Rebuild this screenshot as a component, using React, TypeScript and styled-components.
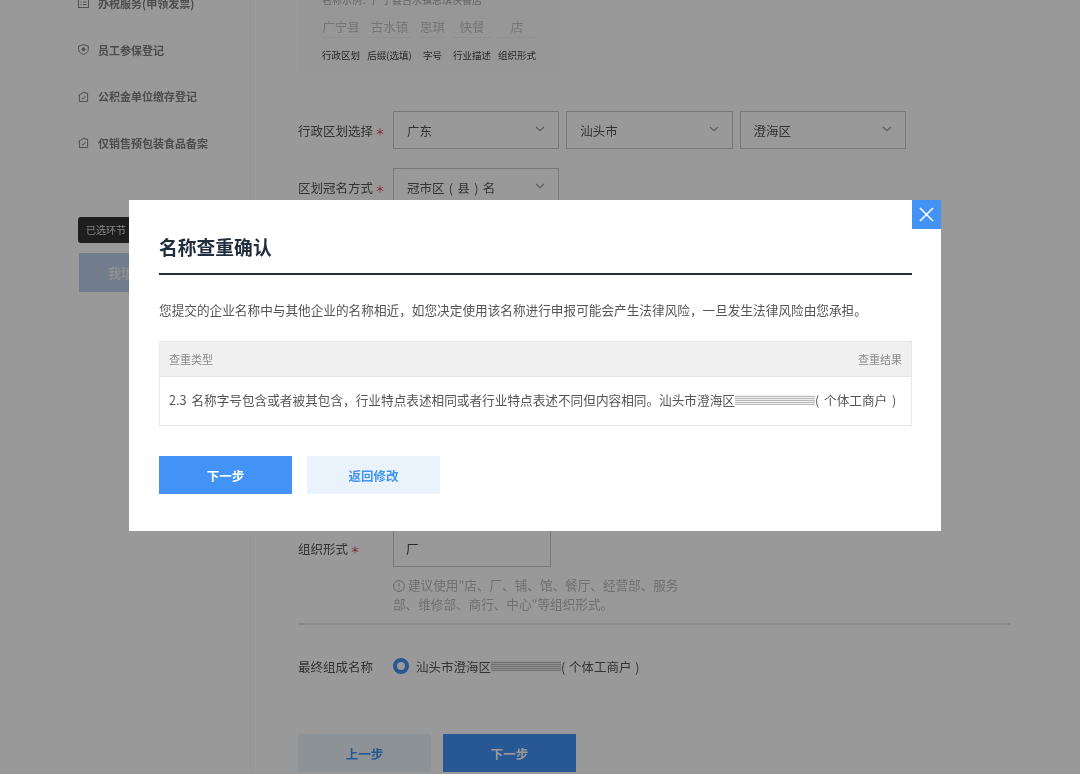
import React from "react";
import styled, { createGlobalStyle } from "styled-components";

const Global = createGlobalStyle`
  html, body { margin: 0; padding: 0; background: #fff; }
  * { box-sizing: border-box; }
  body { font-family: "Noto Sans CJK SC", "Liberation Sans", sans-serif; }
`;

const Page = styled.div`
  width: 1080px;
  height: 774px;
  overflow: hidden;
  display: flex;
  align-items: flex-start;
  background: #fff;
  filter: blur(0.35px);
`;

const Sidebar = styled.aside`
  width: 251px;
  height: 774px;
  flex: none;
  border-right: 1px solid #f3f3f3;
  padding: 0 0 0 78px;
  display: flex;
  flex-direction: column;
`;

const NavList = styled.nav`
  margin-top: -9px;
  display: flex;
  flex-direction: column;
  gap: 22px;
`;

const NavItem = styled.div`
  height: 24.5px;
  display: flex;
  align-items: center;
  gap: 9px;
  font-size: 11px;
  font-weight: 700;
  color: #808080;
  svg { flex: none; }
`;

const Tip = styled.div`
  margin-top: 62px;
  width: 120px;
  height: 26px;
  border-radius: 3px;
  background: #333;
  color: #ddd;
  font-size: 10px;
  line-height: 26px;
  padding-left: 8px;
`;

const SideBtn = styled.div`
  margin: 10px 0 0 1px;
  width: 140px;
  height: 39px;
  background: #bccfea;
  color: #eee;
  font-size: 13px;
  font-weight: 700;
  line-height: 39px;
  padding-left: 29px;
`;

const Main = styled.main`
  margin-left: 47px;
  width: 713px;
  display: flex;
  flex-direction: column;
  align-items: flex-start;
`;

const SampleBox = styled.section`
  width: 262px;
  height: 72px;
  background: #fcfcfc;
  padding: 0 0 0 24px;
  overflow: hidden;
`;

const SampleTitle = styled.div`
  height: 15px;
  margin-top: -8px;
  font-size: 10px;
  line-height: 15px;
  color: #aaa;
`;

const SampleGrid = styled.div`
  display: grid;
  grid-template-columns: 38px 45px 27px 38px 38px;
  column-gap: 7px;
  margin-top: 10px;
`;

const SampleValue = styled.div`
  height: 21px;
  white-space: nowrap;
  border-bottom: 1px solid #f0f0f0;
  font-size: 12.5px;
  line-height: 20px;
  color: #c4c4c4;
  text-align: center;
`;

const SampleLabel = styled.div`
  margin-top: 10px;
  white-space: nowrap;
  font-size: 9.5px;
  line-height: 14px;
  color: #444;
  text-align: center;
`;

const Row = styled.div<{ $top: number }>`
  margin-top: ${(p) => p.$top}px;
  display: flex;
  align-items: center;
  gap: 7px;
`;

const Label = styled.label`
  width: 88px;
  flex: none;
  font-size: 12.5px;
  color: #555;
  white-space: nowrap;
  b { color: #d9334a; font-weight: 400; font-size: 10px; margin-left: 2px; }
`;

const Select = styled.div`
  width: 166.3px;
  height: 38px;
  border: 1px solid #c8c8c8;
  padding: 0 13px 0 13px;
  display: flex;
  align-items: center;
  justify-content: space-between;
  font-size: 12.5px;
  word-spacing: 1.5px;
  color: #555;
  svg { flex: none; margin-top: -3px; }
`;

const Input = styled.div`
  width: 158px;
  height: 38px;
  border: 1px solid #c8c8c8;
  padding: 0 12px;
  display: flex;
  align-items: center;
  font-size: 12.5px;
  color: #444;
`;

const Hidden = styled.div`
  height: 323px;
`;

const Hint = styled.p`
  margin: 8px 0 0 95px;
  width: 300px;
  font-size: 12.6px;
  line-height: 19px;
  color: #bbb;
  svg { vertical-align: -2px; margin-right: 3px; }
`;

const Rule = styled.hr`
  margin: 10px 0 0;
  width: 712px;
  border: 0;
  height: 2px;
  background: #e5e5e5;
`;

const NameRow = styled.div`
  margin-top: 32px;
  height: 18px;
  display: flex;
  align-items: center;
`;

const NameLabel = styled.span`
  width: 95px;
  font-size: 12.5px;
  color: #555;
  white-space: nowrap;
`;

const Radio = styled.span`
  width: 16px;
  height: 16px;
  border-radius: 50%;
  border: 4px solid #4293f5;
  background: #fff;
  margin-right: 7px;
  flex: none;
`;

const NameText = styled.span`
  display: flex;
  align-items: center;
  font-size: 12.5px;
  word-spacing: 1px;
  color: #555;
  white-space: pre;
`;

const Redacted = styled.span<{ $w: number }>`
  display: inline-block;
  width: ${(p) => p.$w}px;
  height: 10px;
  background: repeating-linear-gradient(0deg, #bbb 0 1px, #eee 1px 2px);
  filter: blur(0.6px);
`;

const Actions = styled.div`
  margin-top: 59px;
  display: flex;
  gap: 12px;
`;

const Btn = styled.button<{ $primary?: boolean }>`
  width: 133px;
  height: 38px;
  border: 0;
  padding: 0;
  font-family: inherit;
  font-size: 12.5px;
  font-weight: 700;
  color: ${(p) => (p.$primary ? "#fff" : "#4293f5")};
  background: ${(p) => (p.$primary ? "#4293f5" : "#eaf3fb")};
`;

const Overlay = styled.div`
  position: fixed;
  inset: 0;
  background: rgba(0, 0, 0, 0.4);
`;

const Modal = styled.div`
  position: relative;
  margin: 200px 0 0 129px;
  width: 812px;
  height: 331px;
  background: #fff;
  padding: 0 29px 0 30px;
  filter: blur(0.3px);
`;

const Close = styled.button`
  position: absolute;
  top: 0;
  right: 0;
  width: 29px;
  height: 29px;
  border: 0;
  padding: 0;
  background: #4293f5;
  display: flex;
  align-items: center;
  justify-content: center;
`;

const Title = styled.h2`
  margin: 0;
  height: 75px;
  padding-top: 31px;
  border-bottom: 2px solid #1f2d3d;
  font-size: 18.8px;
  line-height: 32px;
  font-weight: 700;
  color: #1f2d3d;
`;

const Notice = styled.p`
  margin: 25px 0 0;
  font-size: 12.65px;
  line-height: 20px;
  color: #555;
  white-space: nowrap;
`;

const Table = styled.div`
  margin-top: 21px;
  border: 1px solid #e8e8e8;
`;

const TableHead = styled.div`
  height: 35px;
  padding: 0 9px;
  background: #f0f0f0;
  border-bottom: 1px solid #e4e4e4;
  display: flex;
  align-items: center;
  justify-content: space-between;
  font-size: 11px;
  color: #8a8a8a;
`;

const TableRow = styled.div`
  height: 48px;
  padding: 0 9px 3px;
  display: flex;
  align-items: center;
  font-size: 12.65px;
  word-spacing: 2px;
  color: #555;
  white-space: pre;
`;

const ModalActions = styled.div`
  margin-top: 30px;
  display: flex;
  gap: 15px;
`;

const navItems = ["办税服务(申领发票)", "员工参保登记", "公积金单位缴存登记", "仅销售预包装食品备案"];

const DocIcon = () => (
  <svg width="11" height="11" viewBox="0 0 11 11" fill="none" stroke="#888" strokeWidth="1">
    <rect x="0.5" y="1.5" width="10" height="8" />
    <path d="M2.5 4h1M2.5 6.5h1M5 4h3.5M5 6.5h3.5" />
  </svg>
);
const ShieldIcon = () => (
  <svg width="11" height="11" viewBox="0 0 11 11" fill="none" stroke="#888" strokeWidth="1">
    <path d="M5.5.7 10.3 2v3.4c0 2.6-2 4.2-4.8 5C2.700 9.600.7 8 .7 5.400V2z" />
    <circle cx="5.500" cy="5.300" r="1.500" fill="#888" />
  </svg>
);
const HomeIcon = () => (
  <svg width="11" height="11" viewBox="0 0 11 11" fill="none" stroke="#888" strokeWidth="1">
    <path d="M.6 4.400 6.200.8l.2 1.200h3.200v8.500H1.400V4" />
    <path d="M3.600 7l1.500 1 2.300-3" />
  </svg>
);
const navIcons = [DocIcon, ShieldIcon, HomeIcon, HomeIcon];

const Chevron = () => (
  <svg width="10" height="6" viewBox="0 0 10 6" fill="none" stroke="#999" strokeWidth="1.2">
    <path d="M1 1l4 3.600L9 1" />
  </svg>
);

const sample = [
  ["广宁县", "行政区划"],
  ["古水镇", "后缀(选填)"],
  ["思琪", "字号"],
  ["快餐", "行业描述"],
  ["店", "组织形式"],
];

export default function App() {
  return (
    <>
      <Global />
      <Page>
        <Sidebar>
          <NavList>
            {navItems.map((t, i) => {
              const I = navIcons[i];
              return (
                <NavItem key={t}>
                  <I />
                  {t}
                </NavItem>
              );
            })}
          </NavList>
          <Tip>已选环节</Tip>
          <SideBtn>我填好了</SideBtn>
        </Sidebar>
        <Main>
          <SampleBox>
            <SampleTitle>名称示例：广宁县古水镇思琪快餐店</SampleTitle>
            <SampleGrid>
              {sample.map(([v]) => (
                <SampleValue key={v}>{v}</SampleValue>
              ))}
              {sample.map(([, l]) => (
                <SampleLabel key={l}>{l}</SampleLabel>
              ))}
            </SampleGrid>
          </SampleBox>
          <Row $top={39}>
            <Label>
              行政区划选择<b>＊</b>
            </Label>
            <Select>
              广东
              <Chevron />
            </Select>
            <Select>
              汕头市
              <Chevron />
            </Select>
            <Select>
              澄海区
              <Chevron />
            </Select>
          </Row>
          <Row $top={19}>
            <Label>
              区划冠名方式<b>＊</b>
            </Label>
            <Select>
              冠市区 ( 县 ) 名
              <Chevron />
            </Select>
          </Row>
          <Hidden />
          <Row $top={0}>
            <Label>
              组织形式<b>＊</b>
            </Label>
            <Input>厂</Input>
          </Row>
          <Hint>
            <svg width="12" height="12" viewBox="0 0 12 12" fill="none" stroke="#aaa" strokeWidth="1">
              <circle cx="6" cy="6" r="5.400" />
              <path d="M6 2.800v4M6 8.200v1" />
            </svg>
            建议使用"店、厂、铺、馆、餐厅、经营部、服务部、维修部、商行、中心"等组织形式。
          </Hint>
          <Rule />
          <NameRow>
            <NameLabel>最终组成名称</NameLabel>
            <Radio />
            <NameText>
              汕头市澄海区
              <Redacted $w={70} />( 个体工商户 )
            </NameText>
          </NameRow>
          <Actions>
            <Btn>上一步</Btn>
            <Btn $primary>下一步</Btn>
          </Actions>
        </Main>
      </Page>
      <Overlay>
        <Modal>
          <Close aria-label="关闭">
            <svg width="15" height="15" viewBox="0 0 15 15" fill="none" stroke="#fff" strokeWidth="1.6">
              <path d="M1 1l13 13M14 1L1 14" />
            </svg>
          </Close>
          <Title>名称查重确认</Title>
          <Notice>您提交的企业名称中与其他企业的名称相近，如您决定使用该名称进行申报可能会产生法律风险，一旦发生法律风险由您承担。</Notice>
          <Table>
            <TableHead>
              <span>查重类型</span>
              <span>查重结果</span>
            </TableHead>
            <TableRow>
              2.3 名称字号包含或者被其包含，行业特点表述相同或者行业特点表述不同但内容相同。汕头市澄海区
              <Redacted $w={80} />( 个体工商户 )
            </TableRow>
          </Table>
          <ModalActions>
            <Btn $primary>下一步</Btn>
            <Btn>返回修改</Btn>
          </ModalActions>
        </Modal>
      </Overlay>
    </>
  );
}
